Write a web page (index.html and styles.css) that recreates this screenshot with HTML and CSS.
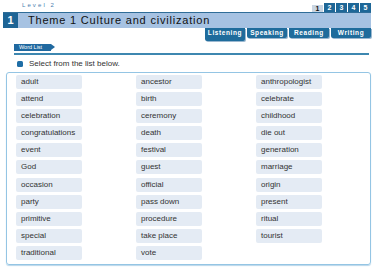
FILE: index.html
```html
<!DOCTYPE html>
<html>
<head>
<meta charset="utf-8">
<link rel="stylesheet" href="styles.css">
</head>
<body>
<div class="page">
  <div class="top">
    <div class="level">Level 2</div>
    <div class="pages">
      <span class="pg current">1</span>
      <span class="pg">2</span>
      <span class="pg">3</span>
      <span class="pg">4</span>
      <span class="pg">5</span>
    </div>
  </div>
  <div class="titlebar">
    <div class="num">1</div>
    <div class="title">Theme 1 Culture and civilization</div>
  </div>
  <div class="skills">
    <span class="skill active">Listening</span>
    <span class="skill">Speaking</span>
    <span class="skill">Reading</span>
    <span class="skill wide">Writing</span>
  </div>
  <div class="section">
    <div class="tag">Word List</div>
  </div>
  <div class="instr"><span class="bullet"></span>Select from the list below.</div>
  <div class="box">
    <div class="col">
      <div class="chip">adult</div>
      <div class="chip">attend</div>
      <div class="chip">celebration</div>
      <div class="chip">congratulations</div>
      <div class="chip">event</div>
      <div class="chip">God</div>
      <div class="chip">occasion</div>
      <div class="chip">party</div>
      <div class="chip">primitive</div>
      <div class="chip">special</div>
      <div class="chip">traditional</div>
    </div>
    <div class="col">
      <div class="chip">ancestor</div>
      <div class="chip">birth</div>
      <div class="chip">ceremony</div>
      <div class="chip">death</div>
      <div class="chip">festival</div>
      <div class="chip">guest</div>
      <div class="chip">official</div>
      <div class="chip">pass down</div>
      <div class="chip">procedure</div>
      <div class="chip">take place</div>
      <div class="chip">vote</div>
    </div>
    <div class="col">
      <div class="chip">anthropologist</div>
      <div class="chip">celebrate</div>
      <div class="chip">childhood</div>
      <div class="chip">die out</div>
      <div class="chip">generation</div>
      <div class="chip">marriage</div>
      <div class="chip">origin</div>
      <div class="chip">present</div>
      <div class="chip">ritual</div>
      <div class="chip">tourist</div>
    </div>
  </div>
</div>
</body>
</html>
```
FILE: styles.css
```css
* { box-sizing: border-box; }
html, body { margin: 0; padding: 0; background: #fff; }
body { font-family: "Liberation Sans", Arial, sans-serif; color: #333; }
.page { width: 376px; height: 269px; padding: 0 5px 0 3px; }

.top { display: flex; justify-content: space-between; align-items: flex-end; height: 12px; }
.level { font-size: 6px; letter-spacing: 2.1px; color: #4a80b0; padding-left: 19px; line-height: 7px; margin-bottom: 3px; }
.pages { display: flex; gap: 1px; align-items: flex-end; }
.pg { width: 11px; height: 9px; background: #1e6797; color: #fff; font-size: 7px; font-weight: bold; line-height: 9px; text-align: center; }
.pg.current { background: #c9d5e2; color: #111; height: 7px; line-height: 8px; }

.titlebar { display: flex; height: 16px; background: #a6c2e2; border-top: 1px solid #2f6d98; }
.num { width: 15px; background: #1d6495; color: #fff; font-weight: bold; font-size: 11px; line-height: 15px; text-align: center; }
.title { font-size: 11px; letter-spacing: 0.8px; color: #111; line-height: 15px; padding-left: 10px; }

.skills { display: flex; justify-content: flex-end; gap: 2px; height: 15px; align-items: flex-start; }
.skill { width: 40px; height: 10px; background: #1f6c9c; color: #fff; font-size: 6.5px; font-weight: bold; letter-spacing: 0.6px; line-height: 10px; text-align: center; border-radius: 0 0 2px 2px; box-shadow: 1px 1px 0 #9bb8d0; }
.skill.active { height: 13px; }
.skill.wide { width: 40px; }

.section { margin-left: 11px; margin-right: 2px; border-bottom: 2px solid #3d87b0; height: 12px; display: flex; align-items: flex-end; }
.tag { position: relative; width: 37px; height: 7px; background: #2069a0; color: #fff; font-size: 5.5px; line-height: 7px; padding-left: 5px; margin-bottom: 2px; }
.tag::after { content: ""; position: absolute; right: -4px; top: 0; border-left: 4px solid #2069a0; border-top: 3.5px solid transparent; border-bottom: 3.5px solid transparent; }

.instr { display: flex; align-items: center; height: 11px; margin-top: 3px; padding-left: 14px; font-size: 8px; color: #333; }
.bullet { width: 6px; height: 6px; background: #1f6ea6; border-radius: 1.5px; margin-right: 6px; }

.box { margin-top: 3px; margin-left: 3px; width: 365px; height: 193px; border: 1px solid #94c5e4; border-radius: 3px; box-shadow: 0 1px 1px #b8d6ea; display: grid; grid-template-columns: 120px 120px 66px; padding: 2px 0 0 9px; }
.col { display: flex; flex-direction: column; gap: 3.1px; }
.chip { width: 66px; height: 14px; background: #e4ebf4; border-radius: 2px; font-size: 8px; line-height: 14px; padding-left: 5px; color: #333; white-space: nowrap; }
```
